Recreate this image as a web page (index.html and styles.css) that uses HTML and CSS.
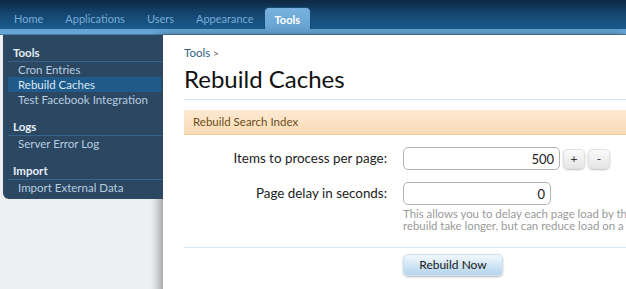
FILE: index.html
```html
<!DOCTYPE html>
<html>
<head>
<meta charset="utf-8">
<title>Rebuild Caches</title>
<link rel="stylesheet" href="styles.css">
</head>
<body>
<header class="topbar">
  <nav class="tabs">
    <a class="tab">Home</a>
    <a class="tab">Applications</a>
    <a class="tab">Users</a>
    <a class="tab">Appearance</a>
    <a class="tab active">Tools</a>
  </nav>
</header>
<div class="strip"></div>
<div class="main">
  <aside class="sidebar">
    <div class="section">
      <h3 class="section-title">Tools</h3>
      <ul class="links">
        <li class="link">Cron Entries</li>
        <li class="link selected">Rebuild Caches</li>
        <li class="link">Test Facebook Integration</li>
      </ul>
    </div>
    <div class="section">
      <h3 class="section-title">Logs</h3>
      <ul class="links">
        <li class="link">Server Error Log</li>
      </ul>
    </div>
    <div class="section">
      <h3 class="section-title">Import</h3>
      <ul class="links">
        <li class="link">Import External Data</li>
      </ul>
    </div>
  </aside>
  <div class="content">
    <div class="breadcrumb"><a class="crumb">Tools</a> <span class="arrow">&gt;</span></div>
    <h1 class="title">Rebuild Caches</h1>
    <div class="form-head">Rebuild Search Index</div>
    <div class="form">
      <label class="label">Items to process per page:</label>
      <div class="field">
        <input class="input wide" type="text" value="500">
        <button class="spin">+</button>
        <button class="spin">-</button>
      </div>
      <label class="label">Page delay in seconds:</label>
      <div class="field column">
        <input class="input narrow" type="text" value="0">
        <p class="hint">This allows you to delay each page load by the specified number of seconds. This will make the<br>rebuild take longer, but can reduce load on a busy server.</p>
      </div>
    </div>
    <div class="submit-row">
      <button class="submit">Rebuild Now</button>
    </div>
  </div>
</div>
</body>
</html>
```
FILE: styles.css
```css
html, body {
  margin: 0;
  padding: 0;
  overflow: hidden;
}
body {
  font-family: Lato, "Liberation Sans", sans-serif;
  background: #eeeff1;
  height: 289px;
}
.topbar {
  height: 29px;
  background: linear-gradient(to bottom, #0e2842 0%, #15446d 45%, #1a5c8f 100%);
  display: flex;
  align-items: flex-end;
}
.tabs {
  display: flex;
  padding-left: 3px;
  height: 22px;
}
.tab {
  display: block;
  padding: 0 11px;
  font-size: 11px;
  line-height: 24px;
  color: #78acd8;
  cursor: pointer;
}
.tab.active {
  margin-left: -1px;
  padding: 0 10px;
  color: #ffffff;
  font-weight: bold;
  background: linear-gradient(to bottom, #78b1dd, #66a4d4);
  border-radius: 5px 5px 0 0;
  border: 1px solid #164a75;
  border-bottom: none;
  line-height: 23px;
}
.strip {
  height: 5px;
  background: #66a5d5;
  border-bottom: 1px solid #4a7ca4;
}
.main {
  display: flex;
  align-items: flex-start;
  height: 254px;
}
.sidebar {
  position: relative;
  z-index: 2;
  margin-left: 3px;
  width: 160px;
  flex: none;
  background: #2b4761;
  border-bottom-left-radius: 6px;
  padding: 9px 0 4px;
}
.section {
  margin: 0 0 0 5px;
}
.section + .section {
  margin-top: 11px;
}
.section-title {
  margin: 0;
  padding-left: 5px;
  font-size: 11.5px;
  font-weight: bold;
  line-height: 17px;
  color: #e6eef5;
  border-bottom: 1px solid #35648e;
}
.links {
  list-style: none;
  margin: 0;
  padding: 0;
}
.link {
  padding-left: 10px;
  margin-right: 2px;
  font-size: 11.5px;
  line-height: 15px;
  color: #b7cde0;
}
.link.selected {
  background: #1f5a8a;
  color: #dde9f3;
}
.content {
  flex: 1;
  min-width: 0;
  height: 254px;
  background: #ffffff;
  box-shadow: -4px 0 9px rgba(0, 0, 0, 0.35);
  padding: 10px 0 0 21px;
  overflow: hidden;
}
.breadcrumb {
  font-size: 11.5px;
  line-height: 16px;
  color: #555;
}
.crumb {
  color: #2d5e86;
}
.arrow {
  font-size: 10px;
  color: #555;
}
.title {
  margin: 4px 0 0;
  font-size: 24px;
  font-weight: normal;
  line-height: 28px;
  color: #111;
  padding-bottom: 6px;
  border-bottom: 1px solid #d6e5f1;
}
.form-head {
  margin-top: 10px;
  height: 24px;
  line-height: 24px;
  padding-left: 9px;
  font-size: 11.5px;
  color: #6a4c18;
  background: linear-gradient(to bottom, #fde9d1, #f9dcb8);
  border-bottom: 1px solid #f3c996;
}
.form {
  display: grid;
  grid-template-columns: 203px 1fr;
  column-gap: 16px;
  row-gap: 12px;
  margin-top: 12px;
}
.label {
  text-align: right;
  font-size: 13.4px;
  line-height: 23px;
  color: #222;
}
.field {
  display: flex;
  align-items: center;
}
.field.column {
  flex-direction: column;
  align-items: flex-start;
}
.input {
  box-sizing: border-box;
  height: 23px;
  border: 1px solid #b3b3b3;
  border-radius: 5px;
  background: #fff;
  font-family: Lato, "Liberation Sans", sans-serif;
  font-size: 13px;
  color: #222;
  text-align: right;
  padding: 0 5px;
  margin: 0;
}
.input.wide {
  width: 157px;
}
.input.narrow {
  width: 148px;
}
.spin {
  box-sizing: border-box;
  width: 22px;
  height: 20px;
  margin: 0 0 0 3px;
  padding: 0;
  border: 1px solid #e0e0e0;
  border-radius: 5px;
  background: linear-gradient(to bottom, #fafafa, #e6e6e6);
  box-shadow: 0 1px 2px rgba(0, 0, 0, 0.25);
  font-family: Lato, "Liberation Sans", sans-serif;
  font-size: 12px;
  color: #333;
}
.hint {
  margin: 3px 0 0;
  font-size: 11.4px;
  line-height: 12px;
  color: #9a9a9a;
  white-space: nowrap;
}
.submit-row {
  margin-top: 15px;
  border-top: 1px solid #d6e5f1;
  padding: 5px 0 0 219px;
}
.submit {
  box-sizing: border-box;
  width: 100px;
  height: 22px;
  margin: 0;
  padding: 0;
  border: 1px solid #cfe0ee;
  border-radius: 5px;
  background: linear-gradient(to bottom, #f1f8fd, #b3d4ed);
  box-shadow: 0 1px 2px rgba(0, 0, 0, 0.3);
  font-family: Lato, "Liberation Sans", sans-serif;
  font-size: 12px;
  color: #1a1a1a;
}
```
